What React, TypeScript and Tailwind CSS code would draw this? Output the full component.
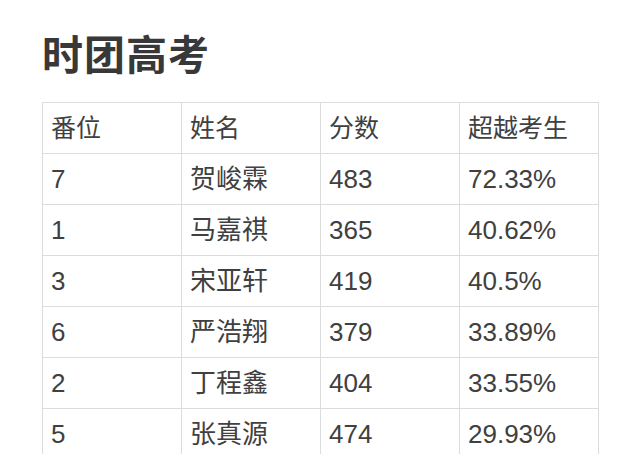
const rows = [
  ["7", "贺峻霖", "483", "72.33%"],
  ["1", "马嘉祺", "365", "40.62%"],
  ["3", "宋亚轩", "419", "40.5%"],
  ["6", "严浩翔", "379", "33.89%"],
  ["2", "丁程鑫", "404", "33.55%"],
  ["5", "张真源", "474", "29.93%"],
];

const head = ["番位", "姓名", "分数", "超越考生"];

export default function App() {
  return (
    <div
      className="h-[454px] overflow-hidden bg-white pl-[42px] pt-[34px] text-[#404040]"
      style={{ fontFamily: '"Liberation Sans", "Noto Sans CJK SC", sans-serif' }}
    >
      <h1 className="text-[41px] font-semibold leading-[44px] text-[#383838] tracking-[1px]">时团高考</h1>
      <table className="mt-[24px] border-collapse table-fixed w-[557px]">
        <thead>
          <tr>
            {head.map((h) => (
              <th
                key={h}
                className="w-[139px] h-[51px] border border-[#dcdcdc] px-[8px] text-left align-middle text-[25px] font-normal leading-none"
              >
                {h}
              </th>
            ))}
          </tr>
        </thead>
        <tbody>
          {rows.map((r) => (
            <tr key={r[0]}>
              {r.map((c, i) => (
                <td
                  key={i}
                  className="h-[51px] border border-[#dcdcdc] px-[8px] text-left align-middle text-[26px] leading-none"
                >
                  {c}
                </td>
              ))}
            </tr>
          ))}
        </tbody>
      </table>
    </div>
  );
}
